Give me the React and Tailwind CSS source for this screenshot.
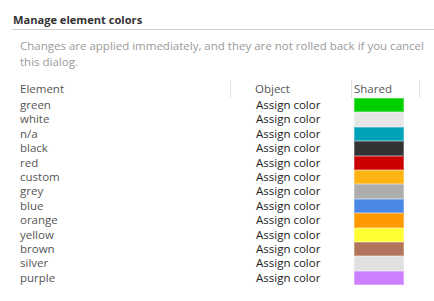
import React from "react";

const rows = [
  ["green", "bg-[#00d000]"],
  ["white", "bg-[#e6e6e6]"],
  ["n/a", "bg-[#00a3b8]"],
  ["black", "bg-[#333333]"],
  ["red", "bg-[#cc0000]"],
  ["custom", "bg-[#ffb414]"],
  ["grey", "bg-[#adadad]"],
  ["blue", "bg-[#4a88e8]"],
  ["orange", "bg-[#ff9900]"],
  ["yellow", "bg-[#ffff33]"],
  ["brown", "bg-[#b3735a]"],
  ["silver", "bg-[#e0e0e0]"],
  ["purple", "bg-[#cc80ff]"],
];

export default function App() {
  return (
    <div
      className="w-[434px] h-[301px] bg-white pl-[12px] pt-[12px] text-[11.5px]"
      style={{ fontFamily: '"Open Sans", "Noto Sans", sans-serif' }}
    >
      <div className="font-bold text-[11.1px] text-[#333] leading-[16px] pl-[1px] pb-[1px] border-b border-[#d0d0d0]">
        Manage element colors
      </div>
      <div className="pl-[8px]">
        <p className="mt-[8px] text-[#9a9a9a] leading-[16px] whitespace-nowrap">
          Changes are applied immediately, and they are not rolled back if you cancel
          <br />
          this dialog.
        </p>
        <div className="mt-[10px] flex h-[18px] leading-[18px] text-[#555]">
          <div className="w-[211px] border-r border-[#e3e3e3]">Element</div>
          <div className="w-[121px] pl-[24px] border-r border-[#e3e3e3]">Object</div>
          <div className="w-[68px] pl-[2px] border-r border-[#e3e3e3]">Shared</div>
        </div>
        <div className="flex flex-col">
          {rows.map(([name, color]) => (
            <div key={name} className="flex h-[14.4px] leading-[14.4px]">
              <div className="w-[236px] text-[#555]">{name}</div>
              <div className="w-[98px] text-[#222]">Assign color</div>
              <div className={`w-[50px] h-[14.4px] ${color} border border-white/30`} />
            </div>
          ))}
        </div>
      </div>
    </div>
  );
}
